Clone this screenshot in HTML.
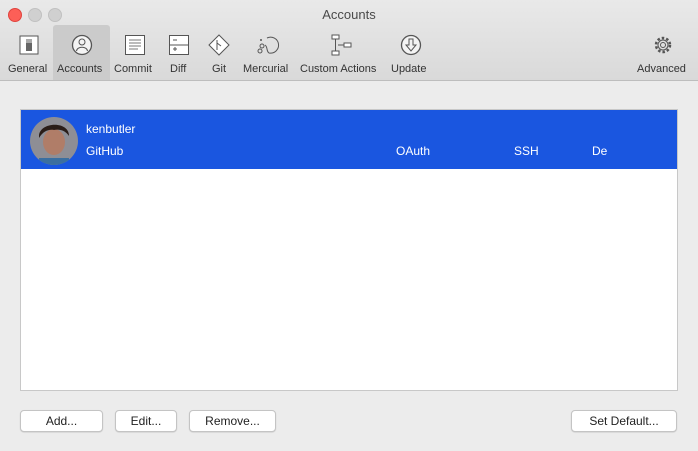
<!DOCTYPE html>
<html><head><style>
body{margin:0;width:698px;height:451px;overflow:hidden;background:#ececec;font-family:"Liberation Sans",sans-serif;font-size:11px;color:#222;position:relative}
.tb{position:absolute;left:0;top:0;width:698px;height:80px;background:linear-gradient(#e9e9e9,#d9d9d9);border-bottom:1px solid #bdbdbd}
.title{position:absolute;top:7px;left:0;width:698px;text-align:center;font-size:13px;color:#4a4a4a}
.dot{position:absolute;top:8px;width:12px;height:12px;border-radius:50%;background:#d0d0d0;border:0.5px solid #c0c0c0}
.it{position:absolute;top:63px;font-size:11px;color:#333;text-align:center}
.sel{position:absolute;left:53px;top:25px;width:57px;height:55px;background:#cbcbcb;border-radius:3px 3px 0 0}
.ic{position:absolute;top:34px}
.table{position:absolute;left:20px;top:109px;width:656px;height:280px;background:#fff;border:1px solid #c8c8c8}
.row{position:absolute;left:0;top:0;width:656px;height:59px;background:#1a56e0;color:#fff;font-size:12px}
.btn{position:absolute;top:410px;height:20px;background:#fff;border:1px solid #c4c4c4;border-radius:4px;box-shadow:0 0.5px 1px rgba(0,0,0,.15);font-size:12px;text-align:center;line-height:20px;color:#222}
</style></head><body>
<div class="tb">
<div class="dot" style="left:8px;background:#fd5f57;border-color:#e0443e"></div>
<div class="dot" style="left:28px"></div>
<div class="dot" style="left:48px"></div>
<div class="title">Accounts</div>
<div class="sel"></div>
<svg class="ic" style="left:18px" width="22" height="22"><rect x="2" y="2" width="18" height="18" fill="#fff" stroke="#555"/><rect x="8" y="5" width="6" height="12" fill="#666"/><rect x="8" y="5" width="6" height="4" fill="#aaa"/></svg>
<svg class="ic" style="left:71px" width="22" height="22"><circle cx="11" cy="11" r="9.5" fill="#f4f4f4" stroke="#555" stroke-width="1.3"/><circle cx="11" cy="8" r="3" fill="none" stroke="#555"/><path d="M5.5 17 C6 12 16 12 16.5 17" fill="none" stroke="#555"/></svg>
<svg class="ic" style="left:124px" width="22" height="22"><rect x="1.5" y="1.5" width="19" height="19" fill="#fff" stroke="#555"/><path d="M5 6h12M5 9h12M5 12h12M5 15h9" stroke="#777"/></svg>
<svg class="ic" style="left:168px" width="22" height="22"><rect x="1.5" y="1.5" width="19" height="19" fill="#fff" stroke="#555"/><path d="M1.5 11h19M5 6h4M5 15h4M7 13v4" stroke="#555"/></svg>
<svg class="ic" style="left:208px" width="22" height="22"><path d="M11 1L21 11 11 21 1 11Z" fill="#fff" stroke="#555"/><path d="M9 6v10M9 9l4 3" stroke="#555"/></svg>
<svg class="ic" style="left:256px" width="24" height="22"><path d="M11 4a8 8 0 1 1 2 15c-3-2-1-6-4-8" fill="none" stroke="#555"/><circle cx="6" cy="12" r="2" fill="none" stroke="#555"/><circle cx="4" cy="17" r="2" fill="none" stroke="#555"/><circle cx="5" cy="6" r="1" fill="#555"/></svg>
<svg class="ic" style="left:330px" width="24" height="22"><rect x="2" y="1" width="7" height="4" fill="#fff" stroke="#555"/><rect x="2" y="17" width="7" height="4" fill="#fff" stroke="#555"/><rect x="14" y="9" width="7" height="4" fill="#fff" stroke="#555"/><path d="M5.5 5v12M8 11h6" stroke="#555"/></svg>
<svg class="ic" style="left:400px" width="22" height="22"><circle cx="11" cy="11" r="9.5" fill="#f4f4f4" stroke="#555" stroke-width="1.3"/><path d="M9 5h4v6h3l-5 6-5-6h3z" fill="none" stroke="#555"/></svg>
<svg class="ic" style="left:652px" width="22" height="22"><circle cx="11" cy="11" r="7" fill="none" stroke="#555" stroke-width="2.5" stroke-dasharray="2.5 2"/><circle cx="11" cy="11" r="5" fill="none" stroke="#555"/><circle cx="11" cy="11" r="2.5" fill="none" stroke="#555"/></svg>
<div class="it" style="left:8px">General</div>
<div class="it" style="left:57px">Accounts</div>
<div class="it" style="left:114px">Commit</div>
<div class="it" style="left:170px">Diff</div>
<div class="it" style="left:212px">Git</div>
<div class="it" style="left:243px">Mercurial</div>
<div class="it" style="left:300px">Custom Actions</div>
<div class="it" style="left:391px">Update</div>
<div class="it" style="left:637px">Advanced</div>
</div>
<div class="table"><div class="row">
<svg style="position:absolute;left:8px;top:6px" width="50" height="50"><defs><clipPath id="c"><circle cx="25" cy="25" r="24"/></clipPath></defs><g clip-path="url(#c)"><rect width="50" height="50" fill="#8e8e95"/><ellipse cx="25" cy="26" rx="11" ry="13" fill="#b07d68"/><path d="M10 20C10 6 40 4 40 20C36 14 30 13 25 14C20 13 14 15 10 22Z" fill="#2a1d18"/><rect x="10" y="42" width="30" height="10" fill="#3b6fa0"/></g></svg>
<div style="position:absolute;left:65px;top:12px">kenbutler</div>
<div style="position:absolute;left:65px;top:34px">GitHub</div>
<div style="position:absolute;left:375px;top:34px">OAuth</div>
<div style="position:absolute;left:493px;top:34px">SSH</div>
<div style="position:absolute;left:571px;top:34px;width:15px;overflow:hidden">De</div>
</div></div>
<div class="btn" style="left:20px;width:81px">Add...</div>
<div class="btn" style="left:115px;width:60px">Edit...</div>
<div class="btn" style="left:189px;width:85px">Remove...</div>
<div class="btn" style="left:571px;width:104px">Set Default...</div>
</body></html>
